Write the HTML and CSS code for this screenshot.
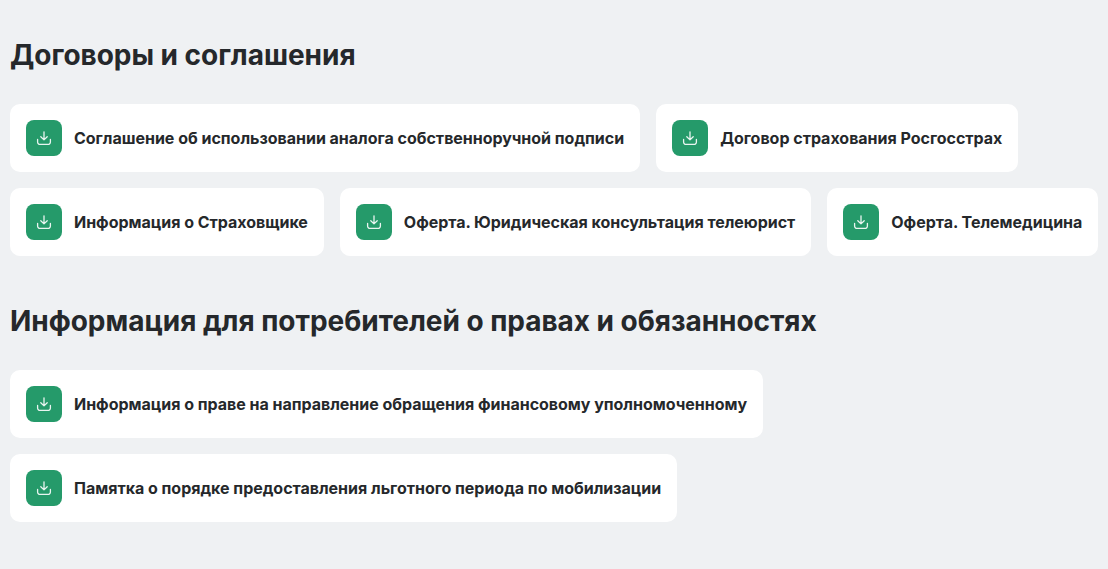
FILE: index.html
```html
<!DOCTYPE html>
<html lang="ru">
<head>
<meta charset="utf-8">
<title>Документы</title>
<link rel="stylesheet" href="styles.css">
</head>
<body>
<main class="page">
  <section class="section">
    <h2 class="title">Договоры и соглашения</h2>
    <div class="docs">
      <a class="doc"><span class="icon"><svg viewBox="0 0 16 16"><path d="M8 1.8v8M4.8 6.8 8 9.9l3.2-3.1M1.6 9.4v2.6a2.4 2.4 0 0 0 2.4 2.4h8a2.4 2.4 0 0 0 2.4-2.4V9.4"/></svg></span><span class="label">Соглашение об использовании аналога собственноручной подписи</span></a>
      <a class="doc"><span class="icon"><svg viewBox="0 0 16 16"><path d="M8 1.8v8M4.8 6.8 8 9.9l3.2-3.1M1.6 9.4v2.6a2.4 2.4 0 0 0 2.4 2.4h8a2.4 2.4 0 0 0 2.4-2.4V9.4"/></svg></span><span class="label">Договор страхования Росгосстрах</span></a>
      <a class="doc"><span class="icon"><svg viewBox="0 0 16 16"><path d="M8 1.8v8M4.8 6.8 8 9.9l3.2-3.1M1.6 9.4v2.6a2.4 2.4 0 0 0 2.4 2.4h8a2.4 2.4 0 0 0 2.4-2.4V9.4"/></svg></span><span class="label">Информация о Страховщике</span></a>
      <a class="doc"><span class="icon"><svg viewBox="0 0 16 16"><path d="M8 1.8v8M4.8 6.8 8 9.9l3.2-3.1M1.6 9.4v2.6a2.4 2.4 0 0 0 2.4 2.4h8a2.4 2.4 0 0 0 2.4-2.4V9.4"/></svg></span><span class="label">Оферта. Юридическая консультация телеюрист</span></a>
      <a class="doc"><span class="icon"><svg viewBox="0 0 16 16"><path d="M8 1.8v8M4.8 6.8 8 9.9l3.2-3.1M1.6 9.4v2.6a2.4 2.4 0 0 0 2.4 2.4h8a2.4 2.4 0 0 0 2.4-2.4V9.4"/></svg></span><span class="label">Оферта. Телемедицина</span></a>
    </div>
  </section>
  <section class="section">
    <h2 class="title">Информация для потребителей о правах и обязанностях</h2>
    <div class="docs">
      <a class="doc"><span class="icon"><svg viewBox="0 0 16 16"><path d="M8 1.8v8M4.8 6.8 8 9.9l3.2-3.1M1.6 9.4v2.6a2.4 2.4 0 0 0 2.4 2.4h8a2.4 2.4 0 0 0 2.4-2.4V9.4"/></svg></span><span class="label">Информация о праве на направление обращения финансовому уполномоченному</span></a>
      <a class="doc"><span class="icon"><svg viewBox="0 0 16 16"><path d="M8 1.8v8M4.8 6.8 8 9.9l3.2-3.1M1.6 9.4v2.6a2.4 2.4 0 0 0 2.4 2.4h8a2.4 2.4 0 0 0 2.4-2.4V9.4"/></svg></span><span class="label">Памятка о порядке предоставления льготного периода по мобилизации</span></a>
    </div>
  </section>
</main>
</body>
</html>
```
FILE: styles.css
```css
* { box-sizing: border-box; }
html, body { margin: 0; }
body {
  background: #eff1f3;
  color: #25282b;
  font-family: Inter, "Liberation Sans", sans-serif;
  min-height: 569px;
}
.page {
  display: flex;
  flex-direction: column;
  gap: 48px;
  padding: 38px 0 47px 10px;
}
.title {
  margin: 0 0 32px;
  font-size: 28px;
  line-height: 34px;
  font-weight: 700;
  letter-spacing: -0.03px;
}
.docs {
  display: flex;
  flex-wrap: wrap;
  gap: 16px;
}
.doc {
  display: flex;
  align-items: center;
  gap: 12px;
  padding: 16px;
  background: #fff;
  border-radius: 10px;
}
.icon {
  flex: none;
  display: flex;
  align-items: center;
  justify-content: center;
  width: 36px;
  height: 36px;
  border-radius: 8px;
  background: #259a6a;
}
.icon svg {
  width: 16px;
  height: 16px;
  fill: none;
  stroke: #fff;
  stroke-opacity: 0.9;
  stroke-width: 1.3;
  stroke-linecap: round;
  stroke-linejoin: round;
}
.label {
  font-size: 16px;
  line-height: 20px;
  font-weight: 700;
  letter-spacing: -0.02px;
}
```
